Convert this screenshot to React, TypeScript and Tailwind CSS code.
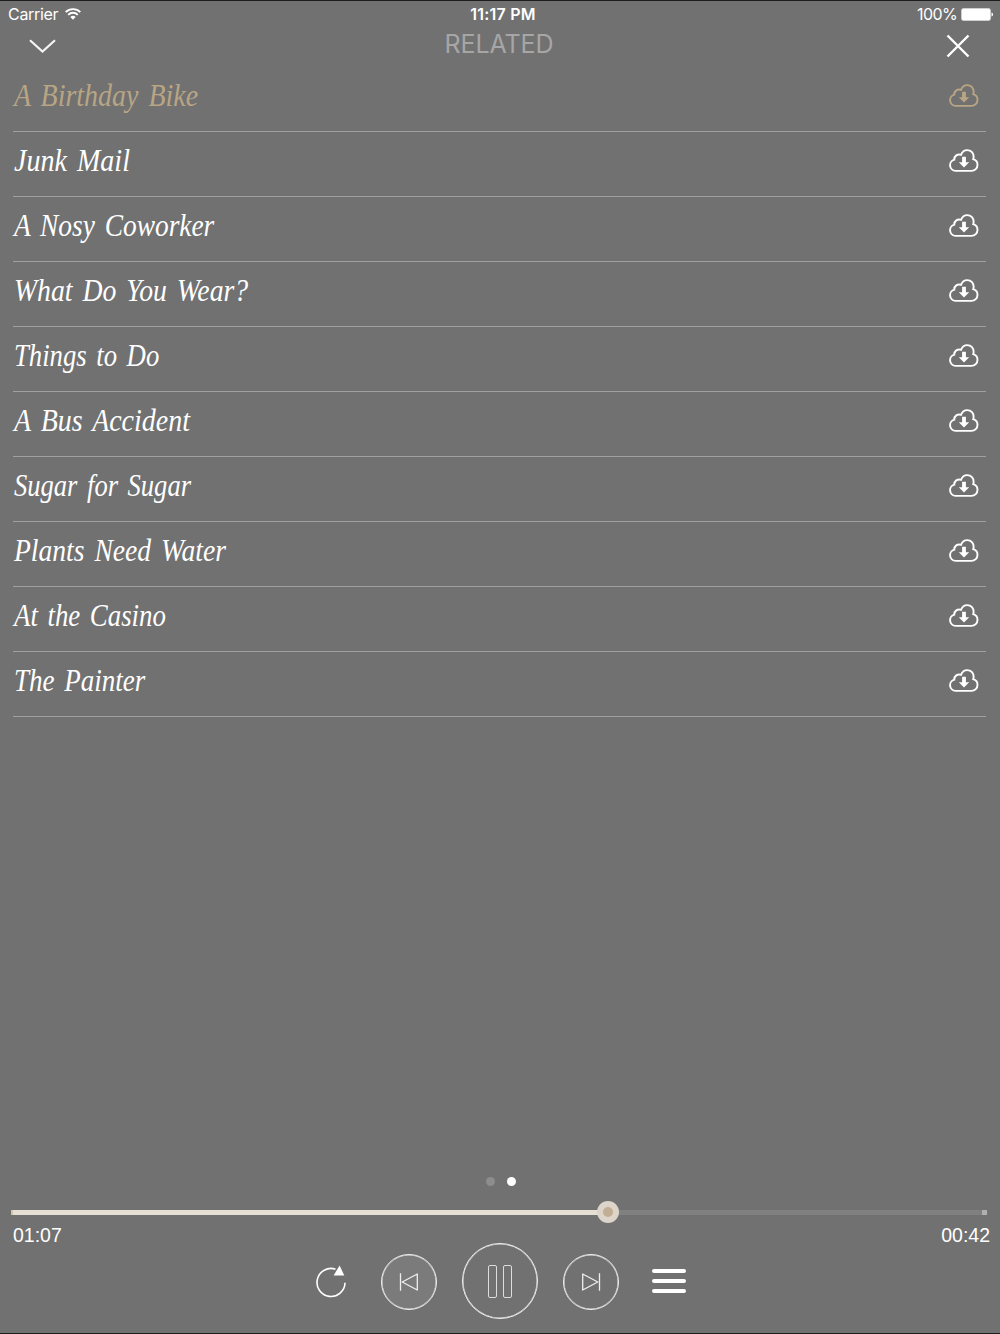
type Track = {
  title: string
  active?: boolean
  fit: string
}

const tracks: Track[] = [
  { title: 'A Birthday Bike', active: true, fit: 'scale-x-[0.873]' },
  { title: 'Junk Mail', fit: 'scale-x-[0.876]' },
  { title: 'A Nosy Coworker', fit: 'scale-x-[0.856]' },
  { title: 'What Do You Wear?', fit: 'scale-x-[0.866]' },
  { title: 'Things to Do', fit: 'scale-x-[0.834]' },
  { title: 'A Bus Accident', fit: 'scale-x-[0.874]' },
  { title: 'Sugar for Sugar', fit: 'scale-x-[0.83]' },
  { title: 'Plants Need Water', fit: 'scale-x-[0.862]' },
  { title: 'At the Casino', fit: 'scale-x-[0.838]' },
  { title: 'The Painter', fit: 'scale-x-[0.845]' },
]

function WifiIcon() {
  return (
    <svg width="16" height="12" viewBox="0 0 16 12" fill="none" stroke="currentColor" strokeWidth="1.9">
      <path d="M.7 4.1a10.4 10.4 0 0 1 14.6 0" />
      <path d="M3.2 6.8a6.8 6.8 0 0 1 9.6 0" />
      <path d="M8 11.7 5.3 9a3.8 3.8 0 0 1 5.4 0z" fill="currentColor" stroke="none" />
    </svg>
  )
}

function CloudDownloadIcon() {
  return (
    <svg width="30" height="24" viewBox="0 0 30 24" fill="none" stroke="currentColor" strokeWidth="1.9">
      <path d="M6.6 21.9a5.7 5.7 0 0 1-1.3-11.2C5.1 7 8.6 4.500 12 5.800 13.200 2.800 15.300 1.100 18.200 1.100c3.900 0 6.700 3.100 6.400 7.200-.1.800-.2 1.300-.4 1.900 2.500.7 4.300 2.900 4.300 5.600 0 3.500-2.600 6.100-6 6.100z" />
      <path d="M13.100 7.700h3.800v5.500h3.300L15 18.500l-5.200-5.300h3.300z" fill="currentColor" stroke="none" />
    </svg>
  )
}

function StatusBar() {
  return (
    <div className="flex h-[26px] items-center text-[16px] leading-[26px]">
      <div className="flex flex-1 items-center gap-[7px] pl-2">
        <span className="tracking-[-0.3px]">Carrier</span>
        <WifiIcon />
      </div>
      <span className="pl-[5px] font-semibold tracking-[0.2px]">11:17 PM</span>
      <div className="flex flex-1 items-center justify-end gap-1 pr-[7px]">
        <span className="tracking-[-0.6px]">100%</span>
        <svg width="32" height="13" viewBox="0 0 32 13">
          <rect x=".5" y=".5" width="29" height="12" rx="2" fill="#fff" stroke="#cfcfcf" />
          <path d="M30.5 4.5c2 .6 2 3.4 0 4z" fill="#fff" />
        </svg>
      </div>
    </div>
  )
}

function Header() {
  return (
    <div className="flex h-[39.5px] items-start justify-between pr-[30px] pl-[29px]">
      <button className="pt-[12px]">
        <svg width="27" height="14" viewBox="0 0 27 14" fill="none" stroke="#f4f4f4" strokeWidth="2.2">
          <path d="M1 1.2 13.5 12.5 26 1.2" />
        </svg>
      </button>
      <h1 className="-ml-1 pt-px text-[25px] leading-8 tracking-[-0.1px] text-[#a6a6a6]">RELATED</h1>
      <button className="pt-[7px]">
        <svg width="24" height="24" viewBox="0 0 24 24" fill="none" stroke="#fff" strokeWidth="2.4">
          <path d="M1.5 1.5l21 21M22.5 1.5l-21 21" />
        </svg>
      </button>
    </div>
  )
}

function TrackRow({ title, active, fit }: Track) {
  return (
    <li
      className={`flex h-[65.1px] items-start justify-between border-b border-[#a0a0a0] pr-[7px] ${
        active ? 'text-[#b8a584]' : 'text-white'
      }`}
    >
      <span
        className={`ml-px origin-left pt-2 font-['Liberation_Serif',serif] text-[32px] leading-[40px] [word-spacing:3.5px] whitespace-nowrap italic ${fit}`}
      >
        {title}
      </span>
      <span className="pt-[17px]">
        <CloudDownloadIcon />
      </span>
    </li>
  )
}

function ProgressBar() {
  return (
    <div className="px-[11px]">
      <div className="relative flex h-[22px] items-center">
        <div className="h-[5px] w-[597px] border-l-2 border-[#d0c6ac] bg-[#e6e0d4]" />
        <div className="h-[5px] flex-1 bg-[#808080]" />
        <div className="mr-0.5 size-[5px] bg-[#b0b0b0]" />
        <div className="absolute left-[586px] flex size-[22px] items-center justify-center rounded-full bg-[#ddd5c9]">
          <div className="size-[10px] rounded-full bg-[#c1ae94]" />
        </div>
      </div>
      <div className="-mr-px flex justify-between pl-0.5 font-['Liberation_Sans',sans-serif] text-[19.5px] leading-[25px]">
        <span>01:07</span>
        <span>00:42</span>
      </div>
    </div>
  )
}

function Controls() {
  return (
    <div className="flex h-[76px] items-center">
      <button className="ml-[315px]">
        <svg width="32" height="34" viewBox="0 0 32 34" fill="none">
          <path d="M20.5 5.2A14 14 0 1 0 30 18.8" stroke="#fff" strokeWidth="1.6" />
          <path d="M24.6 1.6 29.3 11.4H18.6z" fill="#fff" />
        </svg>
      </button>
      <button className="mt-px ml-[34px] flex size-14 items-center justify-center rounded-full border border-[#f0f0f0] bg-[#7b7b7b] shadow-[inset_0_0_0_0.5px_#dddddd]">
        <svg width="20" height="20" viewBox="0 0 20 20" fill="none" stroke="#eee" strokeWidth="1.3" strokeLinejoin="round">
          <path d="M1.5 1.3v17.4M18.3 2v16L3.2 10z" />
        </svg>
      </button>
      <button className="ml-[25px] flex size-[76px] items-center justify-center gap-1.5 rounded-full border border-[#f0f0f0] shadow-[inset_0_0_0_0.5px_#dddddd]">
        <span className="h-[33px] w-[9px] rounded-[2px] border border-[#dddddd]" />
        <span className="h-[33px] w-[9px] rounded-[2px] border border-[#dddddd]" />
      </button>
      <button className="mt-px ml-[25px] flex size-14 items-center justify-center rounded-full border border-[#f0f0f0] shadow-[inset_0_0_0_0.5px_#dddddd]">
        <svg width="20" height="20" viewBox="0 0 20 20" fill="none" stroke="#eee" strokeWidth="1.3" strokeLinejoin="round">
          <path d="M18.5 1.3v17.4M1.7 2v16L16.8 10z" />
        </svg>
      </button>
      <button className="ml-[33px] flex w-[34px] flex-col gap-1.5">
        <span className="h-1 rounded-full bg-white" />
        <span className="h-1 rounded-full bg-white" />
        <span className="h-1 rounded-full bg-white" />
      </button>
    </div>
  )
}

function App() {
  return (
    <div className="flex h-[1334px] w-[1000px] flex-col overflow-hidden border-y border-[#1f1b20] bg-[#717171] font-['Inter',sans-serif] text-white">
      <StatusBar />
      <Header />
      <ul className="mr-3.5 ml-[13px]">
        {tracks.map((track) => (
          <TrackRow key={track.title} {...track} />
        ))}
      </ul>
      <div className="mt-auto pb-[14px]">
        <div className="flex justify-center gap-3 pb-[15px] pl-px">
          <span className="size-[9px] rounded-full bg-[#8d8d8d]" />
          <span className="size-[9px] rounded-full bg-white" />
        </div>
        <ProgressBar />
        <div className="-mt-[5px]">
          <Controls />
        </div>
      </div>
    </div>
  )
}

export default App
